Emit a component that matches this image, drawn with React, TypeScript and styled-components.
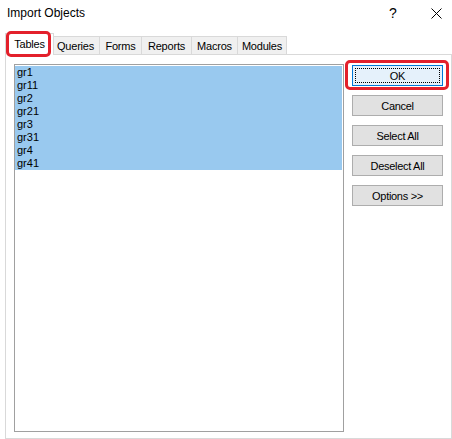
import * as React from 'react';
import styled, { createGlobalStyle, css } from 'styled-components';

const GlobalStyle = createGlobalStyle`
    html, body {
        margin: 0;
        padding: 0;
        background: #ffffff;
    }
    body {
        font-family: "Liberation Sans", Arial, sans-serif;
        color: #000000;
    }
`;

const Window = styled.div`
    width: 452px;
    height: 439px;
    background: #ffffff;
    display: flex;
    flex-direction: column;
    overflow: hidden;
    box-sizing: border-box;
`;

const TitleBar = styled.div`
    height: 26px;
    display: flex;
    align-items: center;
    padding-left: 7px;
    font-size: 12px;
`;

const Title = styled.span`
    flex: 1;
`;

const HelpGlyph = styled.span`
    width: 12px;
    margin-right: 32px;
    text-align: center;
    font-size: 14px;
    line-height: 14px;
`;

const CloseGlyph = styled.svg`
    width: 11px;
    height: 11px;
    margin-right: 10px;
`;

const Body = styled.div`
    padding: 7px 0 0 5px;
    display: flex;
    flex-direction: column;
`;

const TabStrip = styled.div`
    height: 21px;
    display: flex;
    align-items: flex-end;
    padding-left: 2px;
    position: relative;
    z-index: 1;
`;

const Tab = styled.div<{ $w: number; $active?: boolean }>`
    position: relative;
    box-sizing: border-box;
    width: ${p => p.$w}px;
    height: 18px;
    margin-right: -1px;
    display: flex;
    align-items: center;
    justify-content: center;
    font-size: 11px;
    letter-spacing: -0.2px;
    background: #f0f0f0;
    border: 1px solid #d9d9d9;
    border-bottom: none;

    ${p => p.$active && css`
        width: ${p.$w + 4}px;
        height: 22px;
        margin: 0 -3px -1px -2px;
        background: #ffffff;
        z-index: 2;
        padding-bottom: 2px;
    `}
`;

const Marker = styled.span<{ $t: number; $r: number; $b: number; $l: number }>`
    position: absolute;
    top: ${p => p.$t}px;
    right: ${p => p.$r}px;
    bottom: ${p => p.$b}px;
    left: ${p => p.$l}px;
    border: 3px solid #e3202b;
    border-radius: 5px;
    pointer-events: none;
    z-index: 5;
`;

const Panel = styled.div`
    width: 447px;
    height: 385px;
    box-sizing: border-box;
    border: 1px solid #d9d9d9;
    display: flex;
    align-items: flex-start;
    padding: 9px 0 0 8px;
`;

const ListBox = styled.div`
    width: 330px;
    height: 368px;
    box-sizing: border-box;
    border: 1px solid #a0a0a0;
    padding: 1px 1px 0 0;
    display: flex;
    flex-direction: column;
`;

const Item = styled.div<{ $selected?: boolean }>`
    height: 13px;
    line-height: 13px;
    font-size: 11px;
    padding-left: 2px;
    background: ${p => (p.$selected ? '#99c9ef' : 'transparent')};
`;

const ButtonColumn = styled.div`
    margin-left: 8px;
    padding-top: 1px;
    display: flex;
    flex-direction: column;
    gap: 9px;
`;

const Button = styled.button<{ $default?: boolean }>`
    position: relative;
    width: 91px;
    height: 21px;
    box-sizing: border-box;
    padding: 0;
    margin: 0;
    font-family: "Liberation Sans", Arial, sans-serif;
    font-size: 11px;
    letter-spacing: -0.3px;
    color: #000000;
    background: #e1e1e1;
    border: 1px solid #adadad;

    ${p => p.$default && css`
        background: #e5f1fb;
        border-color: #0078d7;

        &::after {
            content: '';
            position: absolute;
            top: 2px;
            right: 2px;
            bottom: 2px;
            left: 2px;
            border: 1px dotted #000000;
        }
    `}
`;

const tabs = [
    { label: 'Tables', w: 45 },
    { label: 'Queries', w: 49 },
    { label: 'Forms', w: 43 },
    { label: 'Reports', w: 51 },
    { label: 'Macros', w: 47 },
    { label: 'Modules', w: 50 },
];

const items = ['gr1', 'gr11', 'gr2', 'gr21', 'gr3', 'gr31', 'gr4', 'gr41'];

export default function App() {
    return (
        <Window>
            <GlobalStyle />
            <TitleBar>
                <Title>Import Objects</Title>
                <HelpGlyph>?</HelpGlyph>
                <CloseGlyph viewBox="0 0 11 11">
                    <path d="M0.5 0.5 L10.5 10.5 M10.5 0.5 L0.5 10.5" stroke="#000" strokeWidth="1" fill="none" />
                </CloseGlyph>
            </TitleBar>
            <Body>
                <TabStrip>
                    {tabs.map((t, i) => (
                        <Tab key={t.label} $w={t.w} $active={i === 0}>
                            {t.label}
                            {i === 0 && <Marker $t={-3} $r={2} $b={-2} $l={0} />}
                        </Tab>
                    ))}
                </TabStrip>
                <Panel>
                    <ListBox>
                        {items.map(name => (
                            <Item key={name} $selected>{name}</Item>
                        ))}
                    </ListBox>
                    <ButtonColumn>
                        <Button $default>
                            OK
                            <Marker $t={-6} $r={-7} $b={-5} $l={-8} />
                        </Button>
                        <Button>Cancel</Button>
                        <Button>Select All</Button>
                        <Button>Deselect All</Button>
                        <Button>Options &gt;&gt;</Button>
                    </ButtonColumn>
                </Panel>
            </Body>
        </Window>
    );
}
